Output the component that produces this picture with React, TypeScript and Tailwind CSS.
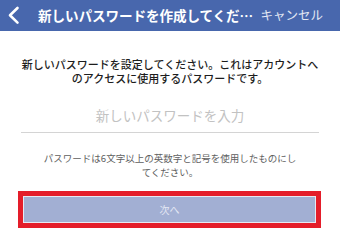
import React from "react";

export default function App() {
  const font = { fontFamily: '"Noto Sans CJK JP", "Noto Sans", sans-serif' };
  return (
    <div className="w-[340px] h-[245px] bg-white overflow-hidden" style={font}>
      <div className="h-[31px] bg-[#4867ad] flex items-center relative">
        <svg width="20" height="31" viewBox="0 0 20 31" className="ml-[3px] shrink-0">
          <path d="M14.5 8 L7 15.3 L14.5 22.6" fill="none" stroke="white" strokeWidth="2.6" strokeLinecap="round" strokeLinejoin="round" />
        </svg>
        <span className="ml-[15px] text-[13.6px] font-bold text-white leading-none whitespace-nowrap tracking-[-0.1px]">
          新しいパスワードを作成してくだ…
        </span>
        <span className="ml-auto mr-[17px] text-[12.5px] text-[#e3e8f4] leading-none whitespace-nowrap">
          キャンセル
        </span>
      </div>
      <div className="w-[302px] mx-auto mt-[26px] text-center text-[11px] leading-[14px] font-medium text-[#1d1d1d]">
        新しいパスワードを設定してください。これはアカウントへのアクセスに使用するパスワードです。
      </div>
      <div className="mx-[21px] mt-[13px] h-[35px] border-b border-[#d4d4d4] flex items-center justify-center text-[13.5px] text-[#c2c2c2]">
        新しいパスワードを入力
      </div>
      <div className="w-[258px] mx-auto mt-[18px] text-center text-[9.5px] leading-[14px] text-[#5e5e5e]">
        パスワードは6文字以上の英数字と記号を使用したものにしてください。
      </div>
      <div className="ml-[18px] mt-[12px] w-[303px] h-[37px] border-[5px] border-[#e41d2a]">
        <div className="h-full w-full border border-[#e6e9f2] bg-[#a2afd3] flex items-center justify-center text-[10px] text-[#e4e8f3]">
          次へ
        </div>
      </div>
    </div>
  );
}
